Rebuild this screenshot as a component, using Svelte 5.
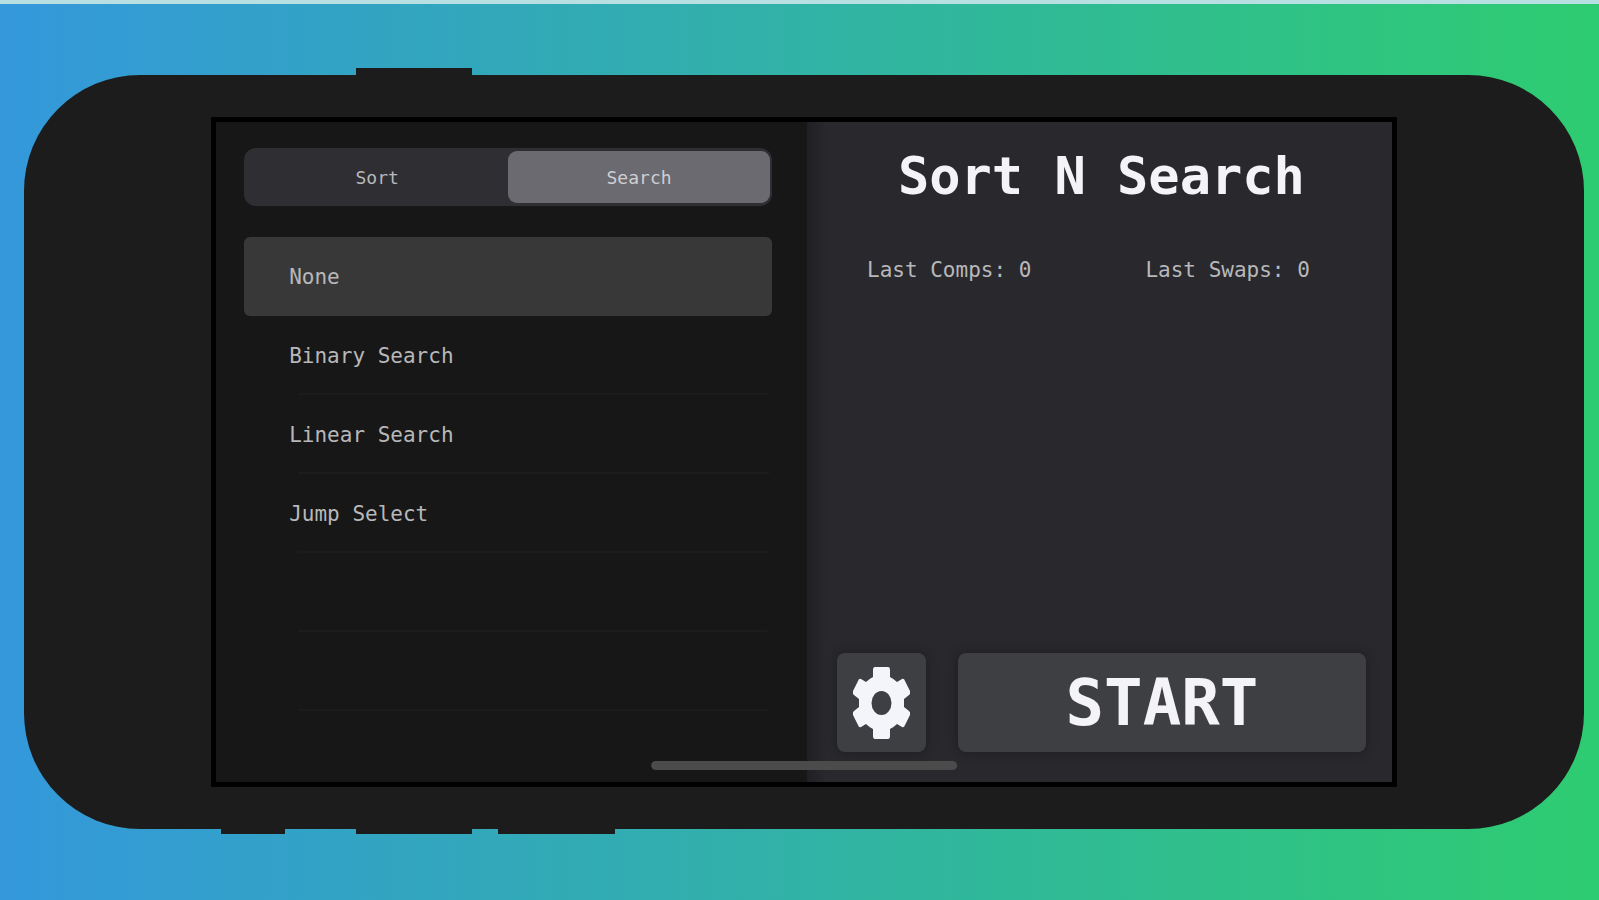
<script lang="ts">
  type Mode = "sort" | "search";

  const modes: { id: Mode; label: string }[] = [
    { id: "sort", label: "Sort" },
    { id: "search", label: "Search" },
  ];

  const algorithms: Record<Mode, string[]> = {
    sort: ["None", "Bubble Sort", "Selection Sort", "Insertion Sort"],
    search: ["None", "Binary Search", "Linear Search", "Jump Select"],
  };

  const rowCount = 6;

  let mode = $state<Mode>("search");
  let selected = $state("None");
  let comps = $state(0);
  let swaps = $state(0);

  const items = $derived(algorithms[mode]);
  const emptyRows = $derived(Array(Math.max(0, rowCount - items.length)));

  function start() {
    comps = 0;
    swaps = 0;
  }
</script>

<main class="page">
  <div class="phone">
    <span class="key key-power"></span>
    <span class="key key-mute"></span>
    <span class="key key-up"></span>
    <span class="key key-down"></span>

    <div class="screen">
      <section class="sidebar">
        <div class="segmented" role="radiogroup" aria-label="Mode">
          {#each modes as m}
            <label class="segment" class:active={mode === m.id}>
              <input
                type="radio"
                name="mode"
                value={m.id}
                bind:group={mode}
                onchange={() => (selected = "None")}
              />
              {m.label}
            </label>
          {/each}
        </div>

        <ul class="list">
          {#each items as item}
            <li class="row" class:selected={selected === item}>
              <button class="row-button" onclick={() => (selected = item)}>{item}</button>
            </li>
          {/each}
          {#each emptyRows as _}
            <li class="row" aria-hidden="true"></li>
          {/each}
        </ul>
      </section>

      <section class="detail">
        <h1>Sort N Search</h1>
        <div class="stats">
          <span>Last Comps: {comps}</span>
          <span>Last Swaps: {swaps}</span>
        </div>
        <div class="actions">
          <button class="action settings" aria-label="Settings">
            <svg viewBox="0 0 57 72" width="57" height="72" aria-hidden="true">
              <path
                fill="#f4f4fb"
                fill-rule="evenodd"
                d="M22 0H35Q37 0 37 3V10Q41 12 44 15L49 12Q51 11 52 14L57 24Q58 26 56 28L51 32V40L56 44Q58 46 57 48L52 58Q51 61 49 60L44 57Q41 60 37 62V69Q37 72 35 72H22Q20 72 20 69V62Q16 60 13 57L8 60Q6 61 5 58L0 48Q-1 46 1 44L6 40V32L1 28Q-1 26 0 24L5 14Q6 11 8 12L13 15Q16 12 20 10V3Q20 0 22 0ZM28.500 24A10 12 0 1 0 28.500 48A10 12 0 1 0 28.500 24Z"
              />
            </svg>
          </button>
          <button class="action start" onclick={start}>START</button>
        </div>
      </section>

      <div class="home-indicator"></div>
    </div>
  </div>
</main>

<style>
  :global(body) {
    margin: 0;
  }

  .page {
    box-sizing: border-box;
    min-height: 100vh;
    display: flex;
    padding: 71px 15px 71px 24px;
    border-top: 4px solid #b8e0e2;
    background: linear-gradient(90deg, #3498db, #2ecc71) padding-box;
    font-family: "DejaVu Sans Mono", monospace;
    color: #b8b8ba;
  }

  .phone {
    position: relative;
    flex: 1;
    display: flex;
    padding: 42px 12%;
    border-radius: 116px;
    background: #1c1c1c;
  }

  /* hardware keys on the edge of the case */
  .key {
    position: absolute;
    bottom: -5px;
    height: 8px;
    background: #1c1c1c;
  }

  .key-power {
    top: -7px;
    bottom: auto;
    left: 21.3%;
    width: 7.4%;
  }

  .key-mute {
    left: 12.6%;
    width: 4.1%;
  }

  .key-up {
    left: 21.3%;
    width: 7.4%;
  }

  .key-down {
    left: 30.4%;
    width: 7.5%;
  }

  .screen {
    position: relative;
    flex: 1;
    display: grid;
    grid-template-columns: 591fr 585fr;
    border: 5px solid #000;
    background: #171717;
  }

  .sidebar {
    padding: 26px 35px 0 28px;
  }

  .segmented {
    display: flex;
    height: 52px;
    padding: 3px 2px;
    margin-bottom: 31px;
    border-radius: 12px;
    background: #2f2e33;
  }

  .segment {
    position: relative;
    flex: 1;
    display: flex;
    align-items: center;
    justify-content: center;
    border-radius: 9px;
    font-size: 18px;
    cursor: pointer;
  }

  .segment.active {
    background: #6b6a70;
    color: #cfcfd2;
  }

  .segment input {
    position: absolute;
    inset: 0;
    margin: 0;
    opacity: 0;
    cursor: pointer;
  }

  .list {
    list-style: none;
    margin: 0;
    padding: 0;
  }

  .row {
    height: 79px;
    border-radius: 6px;
    background: linear-gradient(#1c1c1c, #1c1c1c) 54px 100% / calc(100% - 56px) 2px no-repeat;
  }

  .row.selected {
    background: #383839;
  }

  .row-button {
    width: 100%;
    height: 100%;
    padding: 0 45px;
    border: none;
    background: none;
    color: inherit;
    font: inherit;
    font-size: 21px;
    text-align: left;
    cursor: pointer;
  }

  .detail {
    display: flex;
    flex-direction: column;
    padding: 22px 26px 30px 30px;
    background: linear-gradient(90deg, #202024, #29282d 20px);
  }

  h1 {
    margin: 0;
    font-size: 52px;
    line-height: 64px;
    text-align: center;
    color: #f4f4f8;
  }

  .stats {
    display: flex;
    justify-content: space-between;
    padding: 48px 56px 0 30px;
    font-size: 21px;
    line-height: 28px;
  }

  .actions {
    display: flex;
    gap: 32px;
    margin-top: auto;
  }

  .action {
    display: flex;
    align-items: center;
    justify-content: center;
    height: 99px;
    padding: 0;
    border: none;
    border-radius: 8px;
    background: #3e3f43;
    box-shadow: 0 0 12px rgba(0, 0, 0, 0.3);
    color: #f4f4f8;
    cursor: pointer;
  }

  .settings {
    width: 89px;
  }

  .start {
    flex: 1;
    font: bold 64px "DejaVu Sans Mono", monospace;
  }

  .home-indicator {
    position: absolute;
    left: 50%;
    bottom: 12px;
    width: 26%;
    height: 9px;
    transform: translateX(-50%);
    border-radius: 5px;
    background: #4b4b4b;
  }
</style>
